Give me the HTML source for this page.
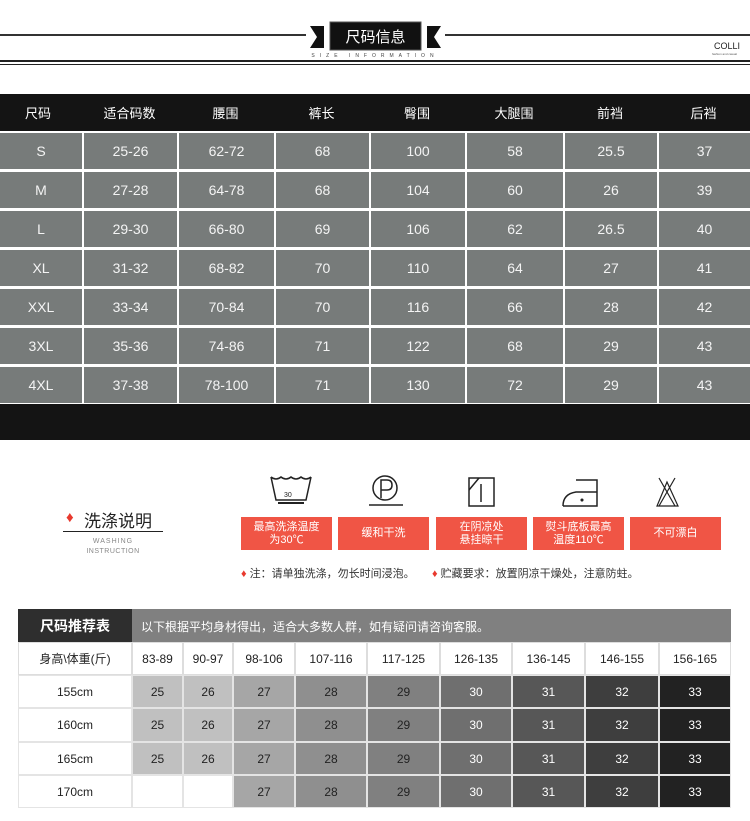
<!DOCTYPE html>
<html><head><meta charset="utf-8"><style>
*{margin:0;padding:0;box-sizing:border-box}
body{width:750px;height:821px;background:#fff;position:relative;overflow:hidden;font-family:"Liberation Sans","Noto Sans CJK SC",sans-serif}
.a{position:absolute}
.c{position:absolute;display:flex;align-items:center;justify-content:center;text-align:center}
</style></head><body>
<div class="a" style="left:0;top:34px;width:306px;height:2px;background:#333"></div>
<div class="a" style="left:445px;top:34px;width:305px;height:2px;background:#333"></div>
<svg class="a" style="left:308px;top:20px" width="135" height="32">
<polygon points="2,6 16,6 16,28 2,28 9,17" fill="#111"/>
<polygon points="133,6 119,6 119,28 133,28 126,17" fill="#111"/>
<rect x="22" y="2" width="91" height="28" fill="#111" stroke="#555" stroke-width="1"/>
</svg>
<div class="c" style="left:330px;top:22px;width:91px;height:28px;color:#fff;font-size:15px">尺码信息</div>
<div class="c" style="left:305px;top:51px;width:140px;height:10px;color:#444;font-size:5px;letter-spacing:5px">SIZE INFORMATION</div>
<div class="a" style="left:0;top:60px;width:750px;height:2px;background:#222"></div>
<div class="a" style="left:0;top:64px;width:750px;height:1px;background:#222"></div>
<div class="a" style="left:714px;top:41px;font-size:9px;color:#222">COLLI</div>
<div class="a" style="left:712px;top:52px;font-size:3px;color:#555">fashion and casual</div>
<div class="a" style="left:0;top:94px;width:750px;height:37px;background:#141414"></div>
<div class="a" style="left:0;top:404px;width:750px;height:36px;background:#141414"></div>
<div id="t1"></div>
<div class="a" style="left:66px;top:509px;color:#e8392e;font-size:15px">♦</div>
<div class="a" style="left:84px;top:507px;font-size:17px;color:#222">洗涤说明</div>
<div class="a" style="left:63px;top:531px;width:100px;height:1px;background:#222"></div>
<div class="c" style="left:63px;top:536px;width:100px;height:10px;font-size:7px;color:#888;letter-spacing:1px">WASHING</div>
<div class="c" style="left:63px;top:546px;width:100px;height:10px;font-size:7px;color:#888;letter-spacing:.5px">INSTRUCTION</div>
<svg class="a" style="left:241px;top:472px" width="480" height="42" fill="none" stroke="#222" stroke-width="1.5">
<path d="M30 5 Q35 9 40 5 Q45 9 50 5 Q55 9 60 5 Q65 9 70 5"/><path d="M30 5 L35 28 H65 L70 5"/><line x1="37" y1="31" x2="63" y2="31" stroke-width="2"/>
<text x="43" y="25" font-size="7" fill="#222" stroke="none" font-family="Liberation Sans">30</text>
<circle cx="144" cy="16" r="12"/><path d="M140 26 V8 H146 Q151 8 151 13 Q151 18 146 18 H140"/><line x1="128" y1="33" x2="162" y2="33"/>
<rect x="228" y="6" width="25" height="28"/><path d="M228 18 L238 6"/><line x1="240" y1="12" x2="240" y2="30"/>
<path d="M322 34 H356 V8 H335 M322 34 Q322 22 335 20 H356"/><circle cx="341" cy="28" r=".8" fill="#222"/>
<path d="M418 6 L434 34 M434 6 L418 34 M426 10 L416 34 H437 Z" stroke-width="1.2"/>
</svg>
<div id="rb"></div>
<div class="a" style="left:241px;top:565px;font-size:11px;color:#333"><span style="color:#e8392e">♦</span> 注：请单独洗涤，勿长时间浸泡。</div>
<div class="a" style="left:432px;top:565px;font-size:11px;color:#333"><span style="color:#e8392e">♦</span> 贮藏要求：放置阴凉干燥处，注意防蛀。</div>
<div class="a" style="left:18px;top:609px;width:114px;height:33px;background:#2e2e2e"></div>
<div class="c" style="left:18px;top:609px;width:114px;height:33px;color:#fff;font-size:14px;font-weight:bold">尺码推荐表</div>
<div class="a" style="left:132px;top:609px;width:599px;height:33px;background:#808080"></div>
<div class="a" style="left:141px;top:618px;color:#fff;font-size:12px">以下根据平均身材得出，适合大多数人群，如有疑问请咨询客服。</div>
<div id="t2"></div>
<script>
var cx=[0,82,177,274,369,465,563,657,750];
var hd=["尺码","适合码数","腰围","裤长","臀围","大腿围","前裆","后裆"];
var d=[["S","25-26","62-72","68","100","58","25.5","37"],["M","27-28","64-78","68","104","60","26","39"],["L","29-30","66-80","69","106","62","26.5","40"],["XL","31-32","68-82","70","110","64","27","41"],["XXL","33-34","70-84","70","116","66","28","42"],["3XL","35-36","74-86","71","122","68","29","43"],["4XL","37-38","78-100","71","130","72","29","43"]];
var h="";
for(var j=0;j<8;j++)h+='<div class="c" style="left:'+(j==0?0:cx[j])+'px;top:94px;width:'+(j==0?76:cx[j+1]-cx[j])+'px;height:37px;color:#fff;font-size:13px">'+hd[j]+'</div>';
for(var i=0;i<7;i++){var y=133+i*39;for(var j=0;j<8;j++){var l=cx[j]+(j?2:0),w=cx[j+1]-l;h+='<div class="c" style="left:'+l+'px;top:'+y+'px;width:'+w+'px;height:36px;background:#777b7a;color:#f4f4f4;font-size:14px">'+d[i][j]+'</div>';}}
document.getElementById("t1").innerHTML=h;
var rx=[241,338,436,533,630],rt=["最高洗涤温度<br>为30℃","缓和干洗","在阴凉处<br>悬挂晾干","熨斗底板最高<br>温度110℃","不可漂白"];h="";
for(var k=0;k<5;k++)h+='<div class="c" style="left:'+rx[k]+'px;top:517px;width:91px;height:33px;background:#f05545;color:#fff;font-size:11px;line-height:13px">'+rt[k]+'</div>';
document.getElementById("rb").innerHTML=h;
var bx=[18,132,183,233,295,367,440,512,585,659,731];
var wt=["身高\\体重(斤)","83-89","90-97","98-106","107-116","117-125","126-135","136-145","146-155","156-165"];
var sh=["","#c0c0c0","#c0c0c0","#a6a6a6","#8f8f8f","#808080","#6f6f6f","#575757","#3e3e3e","#222"];
var rows=[["155cm",25,26,27,28,29,30,31,32,33],["160cm",25,26,27,28,29,30,31,32,33],["165cm",25,26,27,28,29,30,31,32,33],["170cm","","",27,28,29,30,31,32,33]];
var ry=[642,675,708,742,775,808];h="";
for(var j=0;j<10;j++)h+='<div class="c" style="left:'+bx[j]+'px;top:642px;width:'+(bx[j+1]-bx[j])+'px;height:33px;border:1px solid #ddd;color:#222;font-size:12px">'+wt[j]+'</div>';
for(var i=0;i<4;i++)for(var j=0;j<10;j++){var bg=(j==0||rows[i][j]==="")?"#fff":sh[j];var col=j>=6?"#fff":"#222";
h+='<div class="c" style="left:'+bx[j]+'px;top:'+ry[i+1]+'px;width:'+(bx[j+1]-bx[j])+'px;height:'+(ry[i+2]-ry[i+1])+'px;background:'+bg+';border:1px solid #e4e4e4;color:'+col+';font-size:12px">'+rows[i][j]+'</div>';}
document.getElementById("t2").innerHTML=h;
</script>
</body></html>
